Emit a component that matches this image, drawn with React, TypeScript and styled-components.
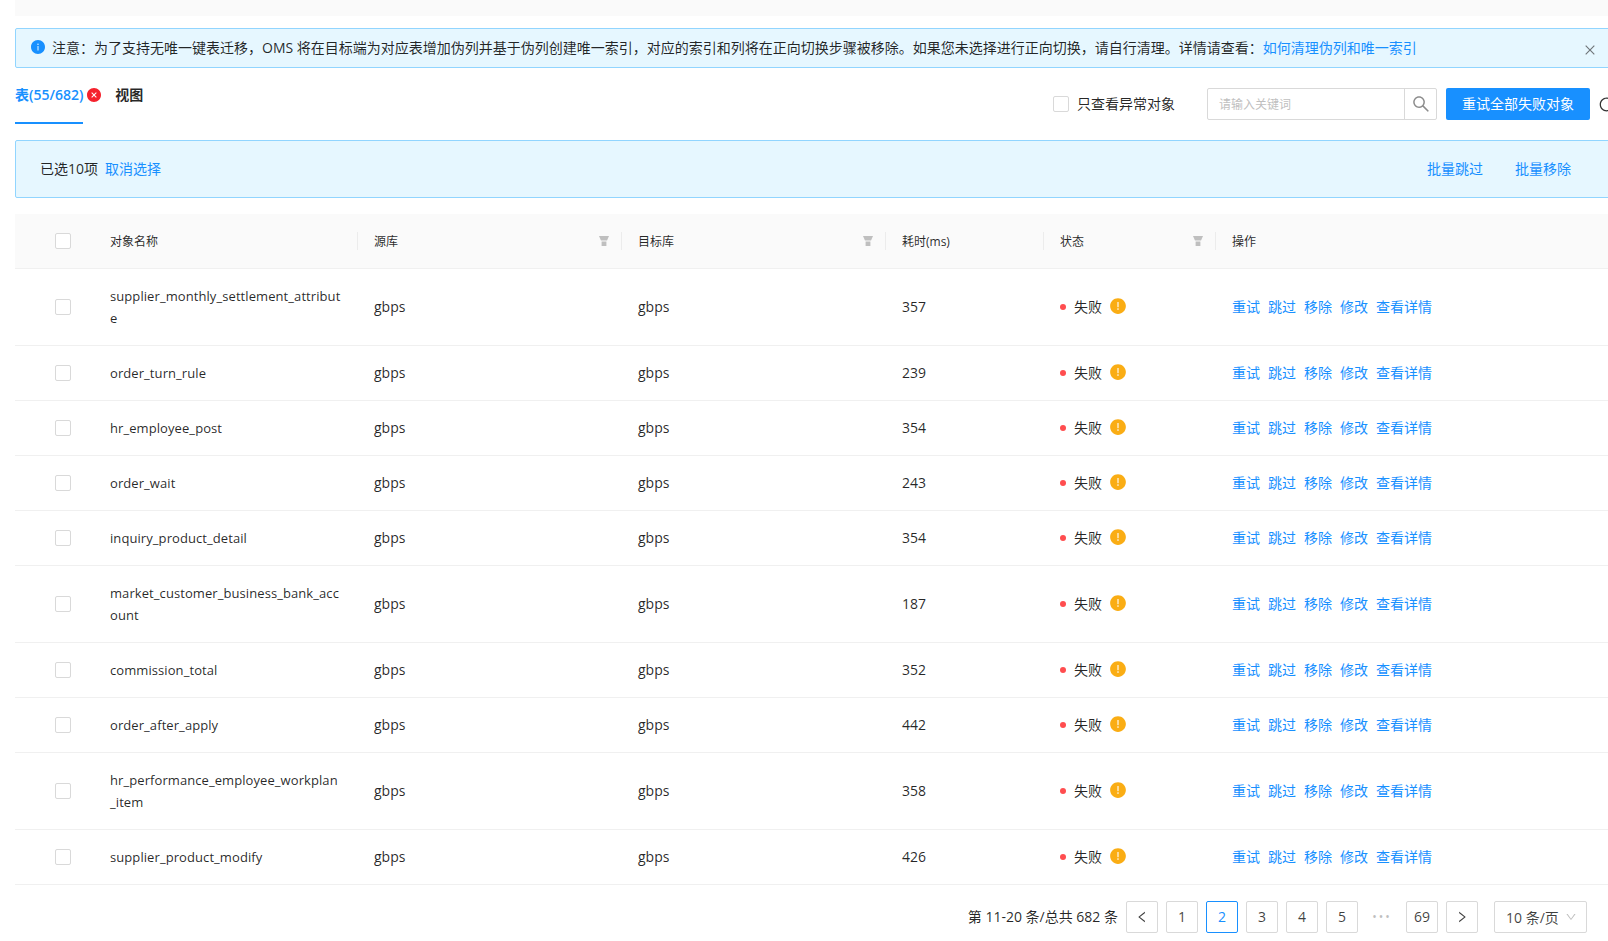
import React from "react";
import styled, { createGlobalStyle } from "styled-components";
import {
  AiFillInfoCircle,
  AiFillCloseCircle,
  AiFillExclamationCircle,
  AiOutlineSearch,
  AiOutlineClose,
  AiOutlineLeft,
  AiOutlineRight,
  AiOutlineDown,
  AiOutlineReload,
} from "react-icons/ai";

const Global = createGlobalStyle`
  html, body { margin: 0; padding: 0; background: #fff; }
  body {
    font-family: "Open Sans", "Noto Sans CJK SC", sans-serif;
    font-size: 14px;
    color: rgba(0, 0, 0, 0.85);
  }
  * { box-sizing: border-box; }
`;

const Viewport = styled.div`
  width: 1608px;
  height: 941px;
  overflow: hidden;
`;
const Page = styled.div`
  width: 1600px;
  margin-left: 15px;
`;
const TopBand = styled.div`
  height: 16px;
  background: #fafafa;
`;
const Alert = styled.div`
  margin-top: 12px;
  height: 40px;
  display: flex;
  align-items: center;
  padding: 0 17px 0 16px;
  background: #e6f7ff;
  border: 1px solid #91d5ff;
  border-radius: 2px;
  line-height: 22px;
`;
const AlertIcon = styled.span`
  display: flex;
  color: #1890ff;
  font-size: 16px;
  margin: -2px 6px 0 -2px;
`;
const AlertText = styled.div`
  flex: 1;
  white-space: nowrap;
`;
const Link = styled.a`
  color: #1890ff;
  text-decoration: none;
`;
const CloseBtn = styled.span`
  display: flex;
  color: #6f7478;
  font-size: 14px;
  margin-top: 4px;
`;
const HeaderRow = styled.div`
  margin-top: 12px;
  height: 44px;
  display: flex;
  justify-content: space-between;
`;
const TabGroup = styled.div`
  display: flex;
  gap: 32px;
`;
const Tab = styled.div<{ $active?: boolean }>`
  position: relative;
  padding-top: 4px;
  height: 44px;
  line-height: 22px;
  font-weight: 600;
  color: ${(p) => (p.$active ? "#1890ff" : "rgba(0,0,0,0.85)")};
  border-bottom: 2px solid ${(p) => (p.$active ? "#1890ff" : "transparent")};
`;
const TabBadge = styled.span`
  position: absolute;
  left: calc(100% + 3px);
  top: 7px;
  display: flex;
  color: #f5222d;
  font-size: 16px;
`;
const Tools = styled.div`
  display: flex;
  align-items: center;
  height: 32px;
  margin-top: 8px;
`;
const Check = styled.span`
  display: block;
  width: 16px;
  height: 16px;
  background: #fff;
  border: 1px solid #d9d9d9;
  border-radius: 2px;
  flex: none;
`;
const CheckLabel = styled.span`
  margin: -2px 32px 0 8px;
`;
const SearchBox = styled.div`
  display: flex;
  width: 230px;
  height: 32px;
  border: 1px solid #d9d9d9;
  border-radius: 2px;
  background: #fff;
`;
const SearchInput = styled.div`
  flex: 1;
  padding-left: 11px;
  font-size: 12px;
  line-height: 32px;
  color: #bfbfbf;
  border-right: 1px solid #d9d9d9;
`;
const SearchBtn = styled.span`
  width: 31px;
  display: flex;
  align-items: center;
  justify-content: center;
  color: #8c8c8c;
  font-size: 20px;
`;
const Primary = styled.button`
  margin-left: 9px;
  height: 32px;
  width: 144px;
  padding: 0 0 2px;
  border: 0;
  border-radius: 2px;
  background: #1890ff;
  color: #fff;
  font: inherit;
`;
const Refresh = styled.span`
  margin-left: 8px;
  display: flex;
  color: #333;
  font-size: 17px;
`;
const SelectBar = styled.div`
  margin-top: 16px;
  height: 58px;
  display: flex;
  align-items: center;
  justify-content: space-between;
  padding: 0 43px 2px 24px;
  background: #e6f7ff;
  border: 1px solid #91d5ff;
  border-radius: 2px;
`;
const Group = styled.div<{ $gap: number }>`
  display: flex;
  gap: ${(p) => p.$gap}px;
`;
const Table = styled.table`
  margin-top: 16px;
  width: 100%;
  table-layout: fixed;
  border-collapse: separate;
  border-spacing: 0;
`;
const Th = styled.th<{ $noDivider?: boolean }>`
  position: relative;
  height: 55px;
  padding: 0 16px;
  background: #fafafa;
  border-bottom: 1px solid #f0f0f0;
  font-size: 12px;
  font-weight: 400;
  text-align: left;
  &::after {
    content: "";
    display: ${(p) => (p.$noDivider ? "none" : "block")};
    position: absolute;
    right: 0;
    top: 18px;
    height: 18px;
    width: 1px;
    background: #ececec;
  }
`;
const FilterIcon = styled.svg`
  position: absolute;
  right: 12px;
  top: 21px;
  width: 12px;
  height: 12px;
  fill: #bfbfbf;
`;
const Td = styled.td`
  padding: 16px;
  border-bottom: 1px solid #f0f0f0;
  line-height: 22px;
  word-break: break-all;
  vertical-align: middle;
`;
const NameCell = styled(Td)`
  font-size: 13px;
  letter-spacing: 0.08px;
`;
const CheckCell = styled(Td)`
  padding: 0 0 0 40px;
`;
const CheckHead = styled(Th)`
  padding: 0 0 0 40px;
  &::after { display: none; }
`;
const Status = styled.div`
  display: flex;
  align-items: center;
`;
const Dot = styled.span`
  width: 6px;
  height: 6px;
  border-radius: 50%;
  background: #ff4d4f;
  margin-right: 8px;
`;
const Warn = styled.span`
  display: flex;
  margin: -2px 0 0 7px;
  color: #faad14;
  font-size: 18px;
`;
const Ops = styled.div`
  display: flex;
  gap: 8px;
  white-space: nowrap;
`;
const Pager = styled.div`
  margin-top: 16px;
  padding-right: 28px;
  display: flex;
  justify-content: flex-end;
  align-items: center;
  gap: 8px;
`;
const PagerTotal = styled.span`
  white-space: nowrap;
  margin-top: -3px;
`;
const PageItem = styled.span<{ $active?: boolean; $ghost?: boolean }>`
  width: 32px;
  height: 32px;
  display: flex;
  align-items: center;
  justify-content: center;
  padding-bottom: 1px;
  background: #fff;
  border: 1px solid ${(p) => (p.$active ? "#1890ff" : p.$ghost ? "transparent" : "#d9d9d9")};
  color: ${(p) => (p.$active ? "#1890ff" : p.$ghost ? "#bfbfbf" : "rgba(0,0,0,0.75)")};
  border-radius: 2px;
  font-size: ${(p) => (p.$ghost ? "12px" : "14px")};
  letter-spacing: ${(p) => (p.$ghost ? "2px" : "0")};
`;
const SizeSelect = styled.span`
  margin-left: 8px;
  width: 93px;
  height: 32px;
  display: flex;
  align-items: center;
  justify-content: space-between;
  padding: 0 9px 1px 11px;
  border: 1px solid #d9d9d9;
  border-radius: 2px;
  color: rgba(0, 0, 0, 0.75);
  white-space: nowrap;
`;
const SizeArrow = styled.span`
  display: flex;
  color: #bfbfbf;
  font-size: 12px;
`;

const rows: [string, number][] = [
  ["supplier_monthly_settlement_attribute", 357],
  ["order_turn_rule", 239],
  ["hr_employee_post", 354],
  ["order_wait", 243],
  ["inquiry_product_detail", 354],
  ["market_customer_business_bank_account", 187],
  ["commission_total", 352],
  ["order_after_apply", 442],
  ["hr_performance_employee_workplan_item", 358],
  ["supplier_product_modify", 426],
];

const notice =
  "\u6ce8\u610f\uff1a\u4e3a\u4e86\u652f\u6301\u65e0\u552f\u4e00\u952e\u8868\u8fc1\u79fb\uff0cOMS \u5c06\u5728\u76ee\u6807\u7aef\u4e3a\u5bf9\u5e94\u8868\u589e\u52a0\u4f2a\u5217\u5e76\u57fa\u4e8e\u4f2a\u5217\u521b\u5efa\u552f\u4e00\u7d22\u5f15\uff0c\u5bf9\u5e94\u7684\u7d22\u5f15\u548c\u5217\u5c06\u5728\u6b63\u5411\u5207\u6362\u6b65\u9aa4\u88ab\u79fb\u9664\u3002\u5982\u679c\u60a8\u672a\u9009\u62e9\u8fdb\u884c\u6b63\u5411\u5207\u6362\uff0c\u8bf7\u81ea\u884c\u6e05\u7406\u3002\u8be6\u60c5\u8bf7\u67e5\u770b\uff1a";

const Funnel = () => (
  <FilterIcon viewBox="0 0 12 12">
    <path d="M1 1h10L9 5.5H3z" />
    <path d="M3.6 6.5h4.8V11H3.6z" />
  </FilterIcon>
);

export default function App() {
  return (
    <Viewport>
      <Global />
      <Page>
        <TopBand />
        <Alert>
          <AlertIcon>
            <AiFillInfoCircle />
          </AlertIcon>
          <AlertText>
            {notice}
            <Link>如何清理伪列和唯一索引</Link>
          </AlertText>
          <CloseBtn>
            <AiOutlineClose />
          </CloseBtn>
        </Alert>
        <HeaderRow>
          <TabGroup>
            <Tab $active>
              表(55/682)
              <TabBadge>
                <AiFillCloseCircle />
              </TabBadge>
            </Tab>
            <Tab>视图</Tab>
          </TabGroup>
          <Tools>
            <Check />
            <CheckLabel>只查看异常对象</CheckLabel>
            <SearchBox>
              <SearchInput>请输入关键词</SearchInput>
              <SearchBtn>
                <AiOutlineSearch />
              </SearchBtn>
            </SearchBox>
            <Primary>重试全部失败对象</Primary>
            <Refresh>
              <AiOutlineReload />
            </Refresh>
          </Tools>
        </HeaderRow>
        <SelectBar>
          <Group $gap={7}>
            <span>已选10项</span>
            <Link>取消选择</Link>
          </Group>
          <Group $gap={32}>
            <Link>批量跳过</Link>
            <Link>批量移除</Link>
          </Group>
        </SelectBar>
        <Table>
          <colgroup>
            <col style={{ width: 79 }} />
            <col style={{ width: 264 }} />
            <col style={{ width: 264 }} />
            <col style={{ width: 264 }} />
            <col style={{ width: 158 }} />
            <col style={{ width: 172 }} />
            <col />
          </colgroup>
          <thead>
            <tr>
              <CheckHead>
                <Check />
              </CheckHead>
              <Th>对象名称</Th>
              <Th>
                源库
                <Funnel />
              </Th>
              <Th>
                目标库
                <Funnel />
              </Th>
              <Th>耗时(ms)</Th>
              <Th>
                状态
                <Funnel />
              </Th>
              <Th $noDivider>操作</Th>
            </tr>
          </thead>
          <tbody>
            {rows.map(([name, ms]) => (
              <tr key={name}>
                <CheckCell>
                  <Check />
                </CheckCell>
                <NameCell>{name}</NameCell>
                <Td>gbps</Td>
                <Td>gbps</Td>
                <Td>{ms}</Td>
                <Td>
                  <Status>
                    <Dot />
                    失败
                    <Warn>
                      <AiFillExclamationCircle />
                    </Warn>
                  </Status>
                </Td>
                <Td>
                  <Ops>
                    <Link>重试</Link>
                    <Link>跳过</Link>
                    <Link>移除</Link>
                    <Link>修改</Link>
                    <Link>查看详情</Link>
                  </Ops>
                </Td>
              </tr>
            ))}
          </tbody>
        </Table>
        <Pager>
          <PagerTotal>第 11-20 条/总共 682 条</PagerTotal>
          <PageItem>
            <AiOutlineLeft />
          </PageItem>
          <PageItem>1</PageItem>
          <PageItem $active>2</PageItem>
          <PageItem>3</PageItem>
          <PageItem>4</PageItem>
          <PageItem>5</PageItem>
          <PageItem $ghost>•••</PageItem>
          <PageItem>69</PageItem>
          <PageItem>
            <AiOutlineRight />
          </PageItem>
          <SizeSelect>
            10 条/页
            <SizeArrow>
              <AiOutlineDown />
            </SizeArrow>
          </SizeSelect>
        </Pager>
      </Page>
    </Viewport>
  );
}
